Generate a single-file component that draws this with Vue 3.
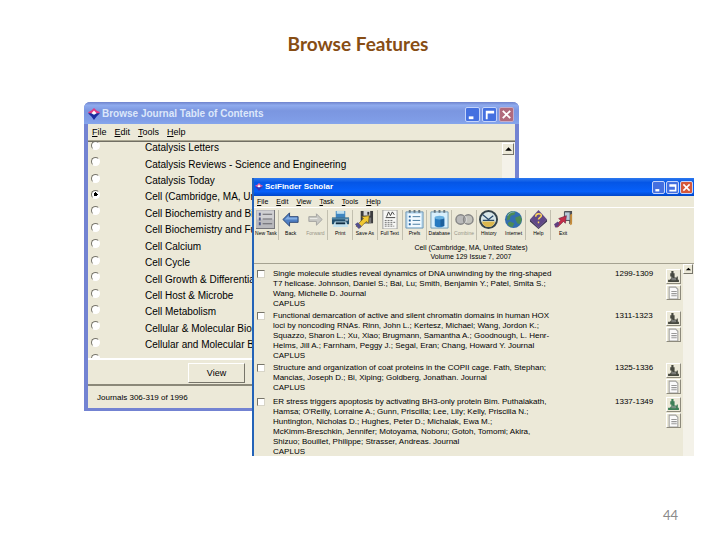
<script setup>
import { ref } from 'vue'

const journals = [
  'Catalysis Letters',
  'Catalysis Reviews - Science and Engineering',
  'Catalysis Today',
  'Cell (Cambridge, MA, United States)',
  'Cell Biochemistry and Biophysics',
  'Cell Biochemistry and Function',
  'Cell Calcium',
  'Cell Cycle',
  'Cell Growth & Differentiation',
  'Cell Host & Microbe',
  'Cell Metabolism',
  'Cellular & Molecular Biology',
  'Cellular and Molecular Biology',
  '',
]
const selected = ref(3)

const browseMenu = [['F', 'ile'], ['E', 'dit'], ['T', 'ools'], ['H', 'elp']]
const scholarMenu = [['F', 'ile'], ['E', 'dit'], ['V', 'iew'], ['T', 'ask'], ['T', 'ools'], ['H', 'elp']]

const tools = [
  { label: 'New Task', sep: true, art: '<path d="M0 0h20v20H0z" fill="#b9b9bd"/><path d="M1 1h18v9H1z" fill="#d0d0d3"/><path d="M19 0h1v20H0v-1h19z" fill="#77777c"/><path d="M7 4h10v1H7zM7 9h10v1H7zM7 14h10v1H7z" fill="#66666c"/><path d="M3 3h2v3H3zM3 8h2v3H3zM3 13h2v3H3z" fill="#505a86"/>' },
  { label: 'Back', art: '<path d="M2 10 9 3v4h9v6H9v4z" fill="#4f7fc4" stroke="#2c4775"/><path d="M4 10 8 6v2h9v2z" fill="#86b0e4"/>' },
  { label: 'Forward', off: true, sep: true, art: '<path d="M17 10 11 4v3H3v5h8v4z" fill="#c9c9c5" stroke="#a3a3a0"/><path d="M4 9h8" stroke="#ecece8"/>' },
  { label: 'Print', sep: true, art: '<path d="M5 1h10v8H5z" fill="#3f86c0"/><path d="M6 1h8v3H6z" fill="#bfe0f0"/><path d="M1 8h18v7H1z" fill="#24506e"/><path d="M1 8h18v2H1z" fill="#4c83a4"/><path d="M4 12h12l2 6H2z" fill="#c3e2ee"/><path d="M5 13h10v2H5z" fill="#102c42"/><path d="M15 10h3v1h-3z" fill="#fff"/>' },
  { label: 'Save As', sep: true, art: '<path d="M6 1h13v13H6z" fill="#3c3c3e"/><path d="M9 1h7v5H9z" fill="#d5d5d5"/><path d="M8 8h9v6H8z" fill="#77777a"/><path d="M13 2h2v3h-2z" fill="#333"/><path d="m1 17 8-8-2-2 8-1-1 8-2-2-7 7z" fill="#f1c832" stroke="#725d1b" stroke-width=".7"/><path d="m0 15 3-2 4 4-3 3z" fill="#54508d"/>' },
  { label: 'Full Text', sep: true, art: '<path d="M3 0h15v20H3z" fill="#f7f7f5" stroke="#9b9b98"/><path d="m7 7 2-5 2 4 2-4 2 3M6 8h10" fill="none" stroke="#454545"/><path d="M5 11h9M5 13h11M5 15h8M5 17h10" stroke="#6e6e6e" stroke-dasharray="2 1"/>' },
  { label: 'Prefs', sep: true, art: '<path d="M1 2h18v17H1z" fill="#c4e1f5" stroke="#6a94b4"/><path d="M4 0h2v3H4zM9 0h2v3H9zM14 0h2v3h-2z" fill="#65757f"/><path d="M3 4h14v14H3z" fill="#f2faff"/><path d="M8 7h8M8 11h8M8 15h8" stroke="#45799e"/><path d="M4 6h2v2H4zM4 10h2v2H4zM4 14h2v2H4z" fill="#276199"/>' },
  { label: 'Database', sep: true, art: '<path d="M1 2h18v17H1z" fill="#d8effc" stroke="#729ab5"/><path d="M4 0h2v3H4zM9 0h2v3H9zM14 0h2v3h-2z" fill="#65757f"/><path d="M5 8v8c0 3 10 3 10 0V8z" fill="#267ac1"/><path d="M11 9h4v8h-4z" fill="#1c5f9c"/><ellipse cx="10" cy="8" rx="5" ry="2" fill="#69b1e0"/>' },
  { label: 'Combine', off: true, sep: true, art: '<circle cx="6" cy="10" r="5" fill="#bababa" stroke="#858585" stroke-width="1.5"/><circle cx="14" cy="10" r="5" fill="#b0b0b0" fill-opacity=".7" stroke="#858585" stroke-width="1.5"/><path d="M10 6c3 2 3 6 0 8" fill="none" stroke="#dedede"/>' },
  { label: 'History', art: '<circle cx="10" cy="10" r="9" fill="#d7e6e8" stroke="#34434a" stroke-width="2"/><path d="M3 12h14c-1 4-4 6-7 6s-6-2-7-6z" fill="#dbb74e"/><path d="m4 5 6 5 5-4M4 11h12" fill="none" stroke="#27496c" stroke-width="1.3"/>' },
  { label: 'Internet', sep: true, art: '<circle cx="10" cy="10" r="9" fill="#336eb0"/><path d="M4 4c3-3 6-3 8-2l-1 3-4 1-1 4-3 1zM12 8l5-2 2 4-2 5-3-1-2-4zM6 12l5 2-2 4c-3 0-5-2-5-4z" fill="#4c8b56"/><path d="M4 6c2-4 6-4 7-4" fill="none" stroke="#8ab6dc"/>' },
  { label: 'Help', sep: true, art: '<path d="M10 0 19 10 10 19 1 10z" fill="#604887"/><path d="m1 10 9 9 9-9v2l-9 8-9-8z" fill="#342950"/><path d="M7 7c0-4 6-4 6-1 0 2-3 2-3 4M10 12v2" fill="none" stroke="#ffd85a" stroke-width="1.5"/>' },
  { label: 'Exit', art: '<path d="M11 1h8v12l-3 2V4h-5z" fill="#4b4e54"/><path d="M11 2h6v9h-6z" fill="#b8cad8" stroke="#4b4e54"/><path d="m17 5 2-1v11l-2 1z" fill="#c68c3b"/><path d="m1 17 6-6-2-2 8-3-1 8-2-2-6 6z" fill="#c52e48" stroke="#772445" stroke-width=".7"/><path d="m0 15 4-3 2 3-4 4z" fill="#61407e"/>' },
]

const records = [
  {
    pages: '1299-1309',
    lines: [
      'Single molecule studies reveal dynamics of DNA unwinding by the ring-shaped',
      'T7 helicase. Johnson, Daniel S.; Bai, Lu; Smith, Benjamin Y.; Patel, Smita S.;',
      'Wang, Michelle D. Journal',
      'CAPLUS',
    ],
  },
  {
    pages: '1311-1323',
    lines: [
      'Functional demarcation of active and silent chromatin domains in human HOX',
      'loci by noncoding RNAs. Rinn, John L.; Kertesz, Michael; Wang, Jordon K.;',
      'Squazzo, Sharon L.; Xu, Xiao; Brugmann, Samantha A.; Goodnough, L. Henr-',
      'Helms, Jill A.; Farnham, Peggy J.; Segal, Eran; Chang, Howard Y. Journal',
      'CAPLUS',
    ],
  },
  {
    pages: '1325-1336',
    lines: [
      'Structure and organization of coat proteins in the COPII cage. Fath, Stephan;',
      'Mancias, Joseph D.; Bi, Xiping; Goldberg, Jonathan. Journal',
      'CAPLUS',
    ],
  },
  {
    pages: '1337-1349',
    green: true,
    lines: [
      'ER stress triggers apoptosis by activating BH3-only protein Bim. Puthalakath,',
      "Hamsa; O'Reilly, Lorraine A.; Gunn, Priscilla; Lee, Lily; Kelly, Priscilla N.;",
      'Huntington, Nicholas D.; Hughes, Peter D.; Michalak, Ewa M.;',
      'McKimm-Breschkin, Jennifer; Motoyama, Noboru; Gotoh, Tomomi; Akira,',
      'Shizuo; Bouillet, Philippe; Strasser, Andreas. Journal',
      'CAPLUS',
    ],
  },
]
</script>

<template>
  <main class="slide">
    <h1>Browse Features</h1>

    <div class="desktop">
      <section class="window browse" aria-label="Browse Journal Table of Contents">
        <header class="titlebar">
          <svg class="logo" viewBox="0 0 14 14" aria-hidden="true"><path d="M7 0 10 3 14 5 11 8H3L0 5 4 3z" fill="#e23a83" /><path d="M0 6h14l-4 4-3 4-3-4z" fill="#1b2ca0" /><path d="m7 3 3 3-3 2-3-2z" fill="#fff" /></svg>
          <h2>Browse Journal Table of Contents</h2>
          <button class="cap" type="button" aria-label="Minimize"><svg viewBox="0 0 14 14"><path d="M3 9h5v3H3z" fill="#fff" /></svg></button>
          <button class="cap" type="button" aria-label="Maximize"><svg viewBox="0 0 14 14"><path d="M3 3h9v3H5v6H3z" fill="#fff" /></svg></button>
          <button class="cap close" type="button" aria-label="Close"><svg viewBox="0 0 14 14"><path d="m3 3 8 8m0-8-8 8" stroke="#fff" stroke-width="2" /></svg></button>
        </header>
        <nav class="menu">
          <button v-for="m in browseMenu" :key="m[1]" type="button"><u>{{ m[0] }}</u>{{ m[1] }}</button>
        </nav>
        <div class="picker">
          <div class="rows">
            <label v-for="(j, i) in journals" :key="i" class="journal">
              <input v-model="selected" type="radio" name="journal" :value="i" :aria-label="j || 'Next journal'" />
              <span>{{ j }}</span>
            </label>
          </div>
          <div class="track"><button type="button" aria-label="Scroll up"><svg viewBox="0 0 9 9"><path d="M2 6h6L5 3z" /></svg></button></div>
        </div>
        <div class="actions"><button type="button">View</button></div>
        <footer class="status">Journals 306-319 of 1996</footer>
      </section>

      <section class="window scholar" aria-label="SciFinder Scholar">
        <header class="titlebar">
          <svg class="logo" viewBox="0 0 14 14" aria-hidden="true"><path d="M7 0 10 3 14 5 11 8H3L0 5 4 3z" fill="#f05a9a" /><path d="M0 6h14l-4 4-3 4-3-4z" fill="#3a34b4" /><path d="m7 3 3 3-3 2-3-2z" fill="#fff" /></svg>
          <h2>SciFinder Scholar</h2>
          <button class="cap" type="button" aria-label="Minimize"><svg viewBox="0 0 14 14"><path d="M3 9h5v3H3z" fill="#fff" /></svg></button>
          <button class="cap" type="button" aria-label="Restore"><svg viewBox="0 0 14 14"><path d="M3 3h9v9H3v-2h7V6H3z" fill="#fff" /></svg></button>
          <button class="cap close" type="button" aria-label="Close"><svg viewBox="0 0 14 14"><path d="m3 3 8 8m0-8-8 8" stroke="#fff" stroke-width="2" /></svg></button>
        </header>
        <nav class="menu">
          <button v-for="m in scholarMenu" :key="m.join('')" type="button"><u>{{ m[0] }}</u>{{ m[1] }}</button>
        </nav>
        <div class="toolbar">
          <button v-for="t in tools" :key="t.label" type="button" :class="{ sep: t.sep, off: t.off }">
            <svg viewBox="0 0 20 20" aria-hidden="true" v-html="t.art"></svg>
            <span>{{ t.label }}</span>
          </button>
        </div>
        <div class="source">
          <p>Cell (Cambridge, MA, United States)</p>
          <p>Volume 129 Issue 7, 2007</p>
        </div>
        <div class="results">
          <ul>
            <li v-for="(r, i) in records" :key="r.pages">
              <input :id="'rec' + i" type="checkbox" />
              <label :for="'rec' + i"><span v-for="l in r.lines" :key="l">{{ l }}</span></label>
              <span class="pages">{{ r.pages }}</span>
              <div class="links">
                <button type="button" aria-label="View details" :class="{ green: r.green }">
                  <svg viewBox="0 0 12 12"><path d="M4 1h2v2h1v4h2V6h1v3h1v2H1V9h2V8h1V6H3V3h1z" fill="currentColor" /><path d="M4 9h4V8H5V7" fill="none" stroke="#999" stroke-width=".7" /></svg>
                </button>
                <button type="button" aria-label="View full text">
                  <svg viewBox="0 0 12 12"><path d="M2 1h6l2 2v9H2z" fill="#fafafa" stroke="#a2a2a0" /><path d="M4 5h5M4 7h5M4 9h5" stroke="#999" /></svg>
                </button>
              </div>
            </li>
          </ul>
          <div class="track"><button type="button" aria-label="Scroll up"><svg viewBox="0 0 9 9"><path d="M2 6h6L5 3z" /></svg></button></div>
        </div>
      </section>
    </div>

    <footer class="number">44</footer>
  </main>
</template>

<style>
body {
  margin: 0;
  background: #fff;
}
</style>

<style scoped>
* {
  box-sizing: border-box;
}
.slide {
  min-height: 100vh;
  display: flex;
  flex-direction: column;
  font-family: "Liberation Sans", Arial, sans-serif;
  color: #000;
}
h1 {
  margin: 32px 4px 46px 0;
  text-align: center;
  font: bold 19px/24px Lato, "Open Sans", sans-serif;
  color: #874d14;
}
h2, p, ul {
  margin: 0;
  padding: 0;
}
button {
  font: inherit;
  color: inherit;
  border: 0;
  padding: 0;
  background: none;
}
svg {
  display: block;
}
.desktop {
  display: grid;
  margin: 0 26px 0 84px;
}
.window {
  grid-area: 1 / 1;
  min-width: 0;
  background: #ece9d8;
}
.titlebar {
  display: flex;
  align-items: center;
}
.titlebar h2 {
  flex: 1;
  white-space: nowrap;
}
.cap {
  border: 1px solid #c4d4fa;
  border-radius: 2px;
  background: #4470e0;
}
.cap svg {
  width: 100%;
}
.menu {
  display: flex;
}

/* Journal browser, the inactive window behind */
.browse {
  align-self: start;
  margin-right: 175px;
  border: solid #7383d2;
  border-width: 0 4px 3px;
  border-radius: 6px 6px 0 0;
}
.browse .titlebar {
  height: 22px;
  margin: 0 -4px;
  padding: 2px 5px 0 4px;
  gap: 2px;
  border-radius: 6px 6px 0 0;
  background: linear-gradient(#6f83cc, #8fabee 15%, #7b96e0 40%, #7f9ce6 80%, #86a6ec);
}
.browse .logo {
  width: 12px;
}
.browse h2 {
  font-size: 10px;
  line-height: 14px;
  color: #dce7fa;
}
.browse .cap {
  width: 15px;
  height: 15px;
}
.browse .close {
  border-color: #c5acc8;
  background: #b06a7c;
}
.browse .menu {
  height: 17px;
  padding: 0 4px;
  gap: 8px;
  font-size: 9px;
  border-bottom: 1px solid #aaa792;
}
.picker {
  display: flex;
  height: 219px;
  overflow: hidden;
  border-top: 1px solid #716f64;
  border-bottom: 2px solid #fff;
}
.rows {
  flex: 1;
  display: grid;
  grid-auto-rows: 1fr;
  height: 230px;
  margin-top: -2px;
}
.journal {
  display: flex;
  align-items: center;
  gap: 45px;
  padding-left: 3px;
  font-size: 10px;
  line-height: 14px;
  white-space: nowrap;
}
.journal input {
  appearance: none;
  width: 9px;
  height: 9px;
  margin: 0 0 6px;
  border: 1px solid #fff;
  border-top-color: #77756a;
  border-left-color: #77756a;
  border-radius: 50%;
  background: #fff;
}
.journal input:checked {
  background: radial-gradient(#000 0 2px, #fff 2px);
}
.track {
  background: #f4f2e9;
}
.track button {
  display: block;
  border: 1px solid #fff;
  border-right-color: #77756a;
  border-bottom-color: #77756a;
  background: #ece9d8;
}
.browse .track {
  width: 13px;
  padding-top: 1px;
}
.browse .track button {
  width: 12px;
  height: 12px;
}
.actions {
  height: 26px;
  padding: 2px 0 0 100px;
  border-bottom: 2px solid #8b8879;
}
.actions button {
  width: 57px;
  height: 20px;
  font-size: 9px;
  border: 1px solid #fff;
  border-right-color: #77756a;
  border-bottom-color: #77756a;
}
.status {
  height: 22px;
  padding-left: 9px;
  font-size: 8px;
  line-height: 24px;
}

/* Record list, the active window in front */
.scholar {
  margin: 76px 0 0 168px;
  height: 278px;
  overflow: hidden;
  border-left: 2px solid #2363b8;
}
.scholar .titlebar {
  height: 18px;
  margin-left: -2px;
  padding: 0 1px 0 3px;
  gap: 1px;
  background: linear-gradient(#2c78ee, #0556e6 25%, #0660fa 75%, #0046c8);
}
.scholar .logo {
  width: 8px;
}
.scholar h2 {
  padding-left: 1px;
  font-size: 8px;
  line-height: 12px;
  color: #fff;
}
.scholar .cap {
  width: 13px;
  height: 13px;
}
.scholar .close {
  background: #d5583a;
}
.scholar .menu {
  height: 12px;
  padding: 0 3px;
  gap: 8px;
  font-size: 7px;
  line-height: 10px;
  border-bottom: 1px solid #fff;
}
.toolbar {
  display: grid;
  grid-template-columns: repeat(13, 1fr);
  width: 322px;
  height: 32px;
  padding-top: 2px;
}
.toolbar button {
  display: flex;
  flex-direction: column;
  align-items: center;
  min-width: 0;
  border-right: 1px solid transparent;
}
.toolbar .sep {
  border-right-color: #c2bfaf;
}
.toolbar svg {
  width: 19px;
  height: 19px;
}
.toolbar span {
  font-size: 5px;
  line-height: 8px;
  white-space: nowrap;
}
.toolbar .off {
  color: #999688;
}
.source {
  height: 24px;
  padding: 3px 6px 0 0;
  font-size: 7px;
  line-height: 9px;
  text-align: center;
  border-bottom: 1px solid #a5a291;
}
.results {
  display: flex;
}
.results ul {
  flex: 1;
  min-width: 0;
  padding-top: 5px;
  list-style: none;
}
.results li {
  display: grid;
  grid-template-columns: 8px 1fr 43px 15px;
  align-items: start;
  column-gap: 8px;
  padding: 0 2px 2px 3px;
}
.results li:nth-child(3) {
  padding-bottom: 4px;
}
.results input {
  appearance: none;
  width: 8px;
  height: 8px;
  margin: 1px 0 0;
  border: 1px solid #d8d5c8;
  border-top-color: #77756a;
  border-left-color: #77756a;
  background: #fff;
}
.results label {
  font-size: 8px;
  line-height: 10px;
  white-space: nowrap;
}
.results label span {
  display: block;
}
.pages {
  font-size: 8px;
  line-height: 10px;
}
.links {
  display: grid;
  gap: 1px;
  height: 30px;
}
.links button {
  width: 15px;
  height: 15px;
  color: #46483f;
  border: 1px solid #fff;
  border-right-color: #8d8a7c;
  border-bottom-color: #8d8a7c;
}
.links .green {
  color: #3c7e56;
}
.scholar .track {
  width: 11px;
  height: 192px;
}
.scholar .track button {
  width: 10px;
  height: 10px;
}
.number {
  margin: auto 42px 16px 0;
  text-align: right;
  font: 13px/18px Lato, "Open Sans", sans-serif;
  color: #8a8a8a;
}
</style>
